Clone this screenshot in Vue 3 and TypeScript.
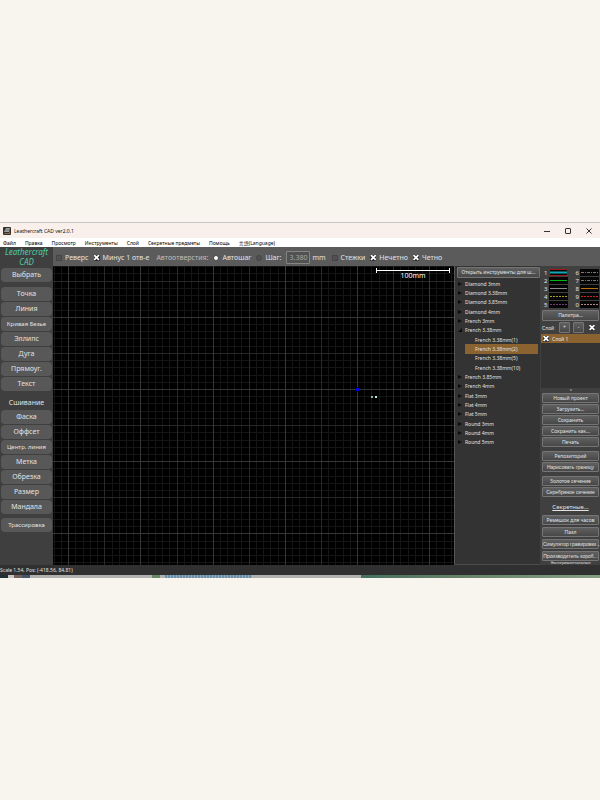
<script setup lang="ts">
import { ref } from 'vue'

const menus = ['Файл', 'Правка', 'Просмотр', 'Инструменты', 'Слой', 'Секретные предметы', 'Помощь', '言語(Language)']

const drawTools = ['Точка', 'Линия', 'Кривая Безье', 'Эллипс', 'Дуга', 'Прямоуг.', 'Текст']
const stitchTools = ['Фаска', 'Оффсет', 'Центр. линия', 'Метка', 'Обрезка', 'Размер', 'Мандала']

interface Node { label: string; kind: 'closed' | 'open' | 'leaf' }
const closed = (label: string): Node => ({ label, kind: 'closed' })
const leaf = (label: string): Node => ({ label, kind: 'leaf' })
const nodes: Node[] = [
  closed('Diamond 3mm'), closed('Diamond 3.38mm'), closed('Diamond 3.85mm'), closed('Diamond 4mm'),
  closed('French 3mm'), { label: 'French 3.38mm', kind: 'open' },
  leaf('French 3.38mm(1)'), leaf('French 3.38mm(2)'), leaf('French 3.38mm(5)'), leaf('French 3.38mm(10)'),
  closed('French 3.85mm'), closed('French 4mm'), closed('Flat 3mm'), closed('Flat 4mm'), closed('Flat 5mm'),
  closed('Round 3mm'), closed('Round 4mm'), closed('Round 5mm'),
]
const selected = ref('French 3.38mm(2)')

const pens = [
  { key: '1', color: '#16a6b4', dash: 'none' }, { key: '6', color: '#777777', dash: '3 1 1 1' },
  { key: '2', color: '#00b512', dash: 'none' }, { key: '7', color: '#777777', dash: '3 1 1 1' },
  { key: '3', color: '#8c8c8c', dash: 'none' }, { key: '8', color: '#b8720f', dash: 'none' },
  { key: '4', color: '#a3a01c', dash: '2 1' }, { key: '9', color: '#c3242c', dash: '2 1' },
  { key: '5', color: '#6d3c78', dash: '2 1' }, { key: '0', color: '#b08a80', dash: '2 1' },
]
const activePen = ref('1')

const fileActions = ['Новый проект', 'Загрузить...', 'Сохранить', 'Сохранить как...', 'Печать']
const secretActions = ['Ремешок для часов', 'Пазл', 'Симулятор гравировки...', 'Производитель короб...']

const reverse = ref(false)
const minusOne = ref(true)
const stitches = ref(false)
const odd = ref(true)
const even = ref(true)
const stepMode = ref('auto')
const step = ref('3.380')
const layersOn = ref(true)
const layerVisible = ref(true)

// Grid lines: ten millimetres per cell, heavier every fifth and tenth line.
const pitch = 7.22
const origin = { x: 304.5, y: 123.5 }
function gridLines(start: number, length: number) {
  const lines: { at: number; level: string }[] = []
  for (let i = Math.ceil(-start / pitch); start + i * pitch < length; i++) {
    lines.push({ at: Math.floor(start + i * pitch) + 0.5, level: i % 10 === 0 ? 'main' : i % 5 === 0 ? 'mid' : 'fine' })
  }
  return lines
}
const columns = gridLines(origin.x, 1600)
const rows = gridLines(origin.y, 1200)
</script>

<template>
  <div class="desktop">
    <main class="window">
      <header class="titlebar">
        <svg class="app-icon" viewBox="0 0 8 8" aria-hidden="true">
          <rect width="8" height="8" rx="1" fill="#34302e" />
          <path d="M1 5 3 1h4L6 5z" fill="#a69b91" />
          <path d="M1 6h5l1-3v4H1z" fill="#8a6a4a" />
          <path d="M2 3h4" stroke="#4e8492" stroke-width="1" />
        </svg>
        <span class="title">Leathercraft CAD ver2.0.1</span>
        <div class="win-buttons">
          <button type="button" aria-label="Свернуть"><svg viewBox="0 0 6 6"><path d="M0 3.500h6" /></svg></button>
          <button type="button" aria-label="Развернуть"><svg viewBox="0 0 6 6"><rect x=".5" y=".5" width="5" height="5" rx=".5" /></svg></button>
          <button type="button" aria-label="Закрыть"><svg viewBox="0 0 6 6"><path d="M.5.5l5 5M5.500.5l-5 5" /></svg></button>
        </div>
      </header>

      <nav class="menubar">
        <button v-for="m in menus" :key="m" type="button">{{ m }}</button>
      </nav>

      <div class="body">
        <aside class="tools">
          <div class="logo">Leathercraft<br />CAD</div>
          <button type="button">Выбрать</button>
          <div class="tool-group">
            <button v-for="t in drawTools" :key="t" type="button" :class="{ long: t.length > 10 }">{{ t }}</button>
          </div>
          <h2>Сшивание</h2>
          <div class="tool-group stitch">
            <button v-for="t in stitchTools" :key="t" type="button" :class="{ long: t.length > 10 }">{{ t }}</button>
          </div>
          <button type="button" class="long last">Трассировка</button>
        </aside>

        <section class="work">
          <div class="options">
            <label><input v-model="reverse" type="checkbox" />Реверс</label>
            <label><input v-model="minusOne" type="checkbox" />Минус 1 отв-е</label>
            <span class="caption">Автоотверстия:</span>
            <label><input v-model="stepMode" type="radio" name="step" value="auto" />Автошаг</label>
            <label><input v-model="stepMode" type="radio" name="step" value="fixed" />Шаг:</label>
            <div class="step-field">
              <input v-model="step" class="step" type="text" aria-label="Шаг" />
              <span>mm</span>
            </div>
            <label><input v-model="stitches" type="checkbox" />Стежки</label>
            <label><input v-model="odd" type="checkbox" />Нечетно</label>
            <label><input v-model="even" type="checkbox" />Четно</label>
          </div>

          <div class="panes">
            <div class="canvas">
              <svg class="grid" aria-hidden="true">
                <template v-for="level in ['fine', 'mid', 'main']" :key="level">
                  <line v-for="c in columns.filter(l => l.level === level)" :key="'c' + c.at" :class="level" :x1="c.at" :x2="c.at" y1="0" y2="100%" />
                  <line v-for="r in rows.filter(l => l.level === level)" :key="'r' + r.at" :class="level" x1="0" x2="100%" :y1="r.at" :y2="r.at" />
                </template>
                <path d="M302 124h5M304.500 121v5" stroke="#00009c" />
                <rect x="303" y="122" width="3" height="3" fill="#0000e6" />
                <rect x="318" y="130" width="2" height="2" fill="#86b5b5" />
                <rect x="322" y="130" width="2" height="2" fill="#b8ecdd" />
              </svg>
              <div class="scale"><div class="ruler"></div>100mm</div>
            </div>

            <aside class="library">
              <button type="button" class="flat">Открыть инструменты для ш...</button>
              <ul class="tree">
                <li v-for="n in nodes" :key="n.label" :class="[n.kind, { selected: n.label === selected }]">
                  <svg v-if="n.kind !== 'leaf'" viewBox="0 0 4 4" aria-hidden="true">
                    <path :d="n.kind === 'open' ? 'M4 0v4H0z' : 'M0 0l4 2-4 2z'" />
                  </svg>
                  <button type="button" @click="selected = n.label">{{ n.label }}</button>
                </li>
              </ul>
            </aside>

            <aside class="side">
              <div class="pens">
                <button v-for="p in pens" :key="p.key" type="button" :class="{ active: p.key === activePen }" @click="activePen = p.key">
                  <span>{{ p.key }}</span>
                  <svg viewBox="0 0 19 7"><path d="M1 3.500h17" :stroke="p.color" :stroke-dasharray="p.dash" /></svg>
                </button>
              </div>
              <button type="button" class="flat palette">Палитра...</button>
              <div class="layer-bar">
                <span>Слой</span>
                <button type="button" class="flat">+</button>
                <button type="button" class="flat">-</button>
                <input v-model="layersOn" type="checkbox" aria-label="Показать слои" />
              </div>
              <div class="layers">
                <label class="layer"><input v-model="layerVisible" type="checkbox" />Слой 1</label>
              </div>
              <div class="handle"></div>
              <div class="actions">
                <button v-for="a in fileActions" :key="a" type="button" class="flat">{{ a }}</button>
              </div>
              <div class="actions">
                <button type="button" class="flat">Репозиторий</button>
                <button type="button" class="flat small">Нарисовать границу</button>
              </div>
              <div class="actions">
                <button type="button" class="flat">Золотое сечение</button>
                <button type="button" class="flat small">Серебряное сечение</button>
              </div>
              <a class="secret" href="#">Секретные...</a>
              <div class="actions secrets">
                <button v-for="(a, i) in secretActions" :key="a" type="button" class="flat" :class="{ small: i > 1 }">{{ a }}</button>
              </div>
              <div class="more">Экспериментальные</div>
            </aside>
          </div>
        </section>
      </div>

      <footer class="status">Scale 1.54, Pos: (-418.56, 84.81)</footer>
      <div class="behind"><i class="photo"></i><i class="badge"></i><i class="link"></i><i class="green"></i></div>
    </main>
  </div>
</template>

<style>
body {
  margin: 0;
  background: #f8f5ee;
}
</style>

<style scoped>
* {
  box-sizing: border-box;
}
.desktop {
  min-height: 100vh;
  display: flex;
  align-items: center;
  font: 5px/8px "Noto Sans", "Noto Sans CJK JP", sans-serif;
  color: #e2e2e2;
}
.window {
  width: 100%;
  border-top: 1px solid #c9c7c4;
}
button, input {
  font: inherit;
  color: inherit;
  margin: 0;
  padding: 0;
}
button {
  border: 0;
  background: none;
  white-space: nowrap;
}
.titlebar {
  height: 15px;
  display: flex;
  align-items: center;
  padding: 0 5px 0 3px;
  gap: 3px;
  background: #f9f0eb;
  color: #111;
}
.app-icon {
  width: 8px;
  height: 8px;
}
.win-buttons {
  margin-left: auto;
  display: flex;
  gap: 9px;
}
.win-buttons button {
  width: 12px;
  height: 12px;
  display: grid;
  place-items: center;
}
.win-buttons svg {
  width: 6px;
  height: 6px;
  fill: none;
  stroke: #333;
  stroke-width: 1;
}
.menubar {
  height: 9px;
  display: flex;
  gap: 9px;
  padding-left: 3px;
  background: #fff;
  color: #000;
}
.body {
  display: flex;
  background: #3f3f3f;
}
.tools {
  width: 53px;
  flex: none;
  padding: 0 1px;
  font-size: 7px;
  line-height: 14px;
}
.tools button {
  display: block;
  width: 100%;
  height: 14px;
  border-radius: 4px;
  background: #585858;
}
.tools .long {
  font-size: 6px;
}
.tools h2 {
  margin: 5px 0 0;
  font: inherit;
  text-align: center;
}
.tools .last {
  margin-top: 4px;
}
.tool-group {
  display: grid;
  gap: 1px;
  margin-top: 5px;
}
.tool-group.stitch {
  margin-top: 0;
}
.logo {
  height: 21px;
  font-size: 8px;
  line-height: 10px;
  font-style: italic;
  text-align: center;
  color: #4fcba6;
}
.work {
  flex: 1;
  min-width: 0;
  display: flex;
  flex-direction: column;
}
.options {
  height: 19px;
  display: flex;
  align-items: center;
  gap: 5px;
  padding: 2px 3px 0;
  background: #5b5b5b;
  font-size: 7px;
  line-height: 12px;
  white-space: nowrap;
}
.options label {
  display: flex;
  align-items: center;
  gap: 3px;
}
.caption {
  color: #bdbdbd;
  margin-left: 2px;
}
.step-field {
  display: flex;
  align-items: center;
  gap: 2px;
  margin-right: 1px;
}
input[type="checkbox"],
input[type="radio"] {
  appearance: none;
  flex: none;
  width: 6px;
  height: 6px;
  background: #505050;
  border: 1px solid #454545;
}
input[type="radio"] {
  border-radius: 3px;
}
input[type="radio"]:checked {
  background: #fff;
}
input[type="checkbox"]:checked {
  border: 0;
  background: #2b2b2b;
}
input[type="checkbox"]:checked::before {
  content: "";
  display: block;
  width: 6px;
  height: 6px;
  background: #fff;
  clip-path: polygon(0 20%, 20% 0, 50% 30%, 80% 0, 100% 20%, 70% 50%, 100% 80%, 80% 100%, 50% 70%, 20% 100%, 0 80%, 30% 50%);
}
.step {
  width: 24px;
  height: 13px;
  border: 1px solid #858585;
  border-radius: 1px;
  background: #515151;
  color: #a8a8a8;
  text-align: center;
}
.panes {
  height: 299px;
  display: flex;
}
.canvas {
  flex: 1;
  min-width: 0;
  position: relative;
  background: #000;
}
.grid {
  display: block;
  width: 100%;
  height: 100%;
}
.fine {
  stroke: #151515;
}
.mid {
  stroke: #292929;
}
.main {
  stroke: #373737;
}
.scale {
  position: absolute;
  top: 2px;
  right: 4px;
  width: 74px;
  font-size: 7px;
  line-height: 9px;
  text-align: center;
  color: #fff;
}
.ruler {
  height: 5px;
  margin-bottom: -2px;
  border: solid #fff;
  border-width: 0 1px;
  background: linear-gradient(#fff, #fff) center / 100% 1px no-repeat;
}
.library {
  width: 86px;
  flex: none;
  padding: 1px 0 0 2px;
  border-left: 1px solid #555;
  border-bottom: 1px solid #4b4b4b;
  background: #333;
}
.flat {
  display: block;
  width: 100%;
  height: 11px;
  line-height: 9px;
  border: 1px solid #757575;
  border-radius: 1px;
  background: linear-gradient(#606060, #484848);
}
.tree {
  height: 168px;
  margin: 1px 0 0;
  padding: 0 2px 0 0;
  list-style: none;
  display: flex;
  flex-direction: column;
}
.tree li {
  flex: 1;
  min-height: 0;
  display: flex;
  align-items: center;
  gap: 3px;
  padding-left: 1px;
}
.tree svg {
  width: 4px;
  height: 4px;
  fill: #0c0c0c;
}
.tree .leaf {
  margin-left: 8px;
  padding-left: 10px;
}
.tree .selected {
  background: #8a6331;
}
.side {
  width: 60px;
  flex: none;
  padding: 3px 1px 0 2px;
  background: #404040;
}
.pens {
  display: grid;
  grid-template-columns: 1fr 1fr;
  column-gap: 6px;
  font-size: 6px;
}
.pens button {
  height: 8px;
  display: flex;
  align-items: flex-start;
  justify-content: flex-end;
  gap: 1px;
}
.pens svg {
  flex: none;
  width: 19px;
  height: 7px;
  background: #060606;
}
.pens path {
  stroke-width: 1;
}
.pens .active svg {
  outline: 1px solid #a01818;
  outline-offset: -1px;
}
.pens .active path {
  stroke-width: 2;
}
.palette {
  margin-top: 1px;
}
.layer-bar {
  height: 13px;
  display: flex;
  align-items: center;
  gap: 3px;
}
.layer-bar .flat {
  width: 11px;
}
.layer-bar span {
  width: 14px;
}
.layer-bar input {
  margin: 0 4px 0 auto;
}
.layers {
  height: 54px;
  margin: 0 -1px;
  background: #333;
}
.layer {
  height: 9px;
  display: flex;
  align-items: center;
  gap: 3px;
  padding-left: 2px;
  background: #8a6331;
}
.handle {
  width: 2px;
  height: 2px;
  margin: 1px auto 2px;
  background: #777;
}
.actions {
  display: grid;
  grid-template-columns: minmax(0, 1fr);
  gap: 1px;
  margin-bottom: 4px;
}
.actions .flat {
  height: 10px;
  line-height: 8px;
}
.actions .small {
  font-family: "Liberation Sans", sans-serif;
}
.secret {
  display: block;
  margin: 6px 0 3px;
  font-size: 6px;
  line-height: 9px;
  text-align: center;
  color: inherit;
}
.actions.secrets {
  gap: 2px;
  margin-bottom: 0;
}
.more {
  font-size: 4px;
  line-height: 4px;
  text-align: center;
}
.status {
  height: 10px;
  line-height: 10px;
  background: #303030;
}
.behind {
  height: 3px;
  display: flex;
  background: #b0b0ae;
}
.behind i {
  height: 3px;
}
.photo {
  flex: 0 0 30px;
  background: linear-gradient(90deg, #1f3038 8px, #c5c5c5 8px 14px, #78605a 14px 22px, #43566a 22px);
}
.badge {
  flex: 0 0 8px;
  margin-left: 122px;
  background: #668a66;
}
.link {
  flex: 0 0 87px;
  margin-left: 5px;
  background: repeating-linear-gradient(90deg, #6590ae 0 2px, #9baab4 2px 3px);
}
.green {
  flex: 1;
  margin-left: 109px;
  background: linear-gradient(90deg, #45715f, #668266 40%, #849f80);
}
</style>
